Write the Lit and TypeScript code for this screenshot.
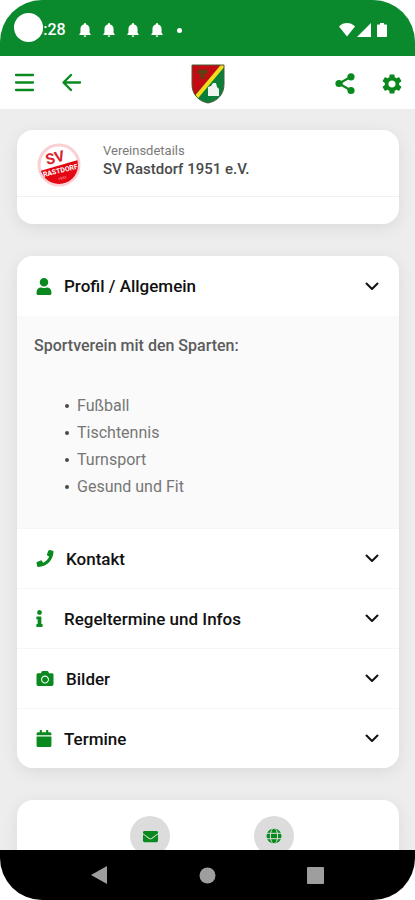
import { LitElement, html, css, nothing } from "lit";
import { customElement, property, state } from "lit/decorators.js";

const icons: Record<string, { box: string; w: number; h: number; d: string }> = {
  user: { box: "0 0 448 512", w: 16, h: 17, d: "M224 256c70.7 0 128-57.3 128-128S294.7 0 224 0 96 57.3 96 128s57.3 128 128 128zm89.6 32h-16.7c-22.2 10.2-46.9 16-72.9 16s-50.6-5.8-72.9-16h-16.7C60.2 288 0 348.2 0 422.4V464c0 26.5 21.5 48 48 48h352c26.5 0 48-21.5 48-48v-41.6c0-74.2-60.2-134.4-134.4-134.4z" },
  phone: { box: "0 0 512 512", w: 18, h: 17, d: "M493.4 24.6l-104-24c-11.3-2.6-22.9 3.3-27.5 13.9l-48 112c-4.2 9.8-1.4 21.3 6.9 28l60.6 49.6c-36 76.7-98.9 140.5-177.2 177.2l-49.6-60.6c-6.8-8.3-18.2-11.1-28-6.9l-112 48C3.9 366.5-2 378.1.6 389.4l24 104C27.1 504.2 36.7 512 48 512c256.1 0 464-207.5 464-464 0-11.2-7.7-20.9-18.6-23.4z" },
  info: { box: "0 0 192 512", w: 7, h: 17, d: "M20 424.229h20V279.771H20c-11.046 0-20-8.954-20-20V212c0-11.046 8.954-20 20-20h112c11.046 0 20 8.954 20 20v212.229h20c11.046 0 20 8.954 20 20V492c0 11.046-8.954 20-20 20H20c-11.046 0-20-8.954-20-20v-47.771c0-11.046 8.954-20 20-20zM96 0C56.235 0 24 32.235 24 72s32.235 72 72 72 72-32.235 72-72S135.764 0 96 0z" },
  camera: { box: "0 0 512 512", w: 18, h: 17, d: "M512 144v288c0 26.5-21.5 48-48 48H48c-26.5 0-48-21.5-48-48V144c0-26.5 21.5-48 48-48h88l12.3-32.9c7-18.7 24.9-31.1 44.9-31.1h125.5c20 0 37.9 12.4 44.9 31.1L376 96h88c26.5 0 48 21.5 48 48zM376 288c0-66.2-53.8-120-120-120s-120 53.8-120 120 53.8 120 120 120 120-53.8 120-120zm-32 0c0 48.5-39.5 88-88 88s-88-39.5-88-88 39.5-88 88-88 88 39.5 88 88z" },
  calendar: { box: "0 0 448 512", w: 16, h: 17, d: "M12 192h424c6.6 0 12 5.4 12 12v260c0 26.5-21.5 48-48 48H48c-26.5 0-48-21.5-48-48V204c0-6.6 5.4-12 12-12zm436-44v-36c0-26.5-21.5-48-48-48h-48V12c0-6.6-5.4-12-12-12h-40c-6.6 0-12 5.4-12 12v52H160V12c0-6.6-5.4-12-12-12h-40c-6.6 0-12 5.4-12 12v52H48C21.5 64 0 85.5 0 112v36c0 6.6 5.4 12 12 12h424c6.6 0 12-5.4 12-12z" },
  envelope: { box: "0 0 512 512", w: 15, h: 15, d: "M502.3 190.8c3.9-3.1 9.7-.2 9.7 4.7V400c0 26.5-21.5 48-48 48H48c-26.5 0-48-21.5-48-48V195.6c0-5 5.7-7.8 9.7-4.7 22.4 17.4 52.1 39.5 154.1 113.6 21.1 15.4 56.7 47.8 92.2 47.6 35.7.3 72-32.8 92.3-47.6 102-74.1 131.6-96.3 154-113.7zM256 320c23.2.4 56.6-29.2 73.4-41.4 132.7-96.3 142.8-104.7 173.4-128.7 5.8-4.5 9.2-11.5 9.2-18.9v-19c0-26.5-21.5-48-48-48H48c-26.5 0-48 21.5-48 48v19c0 7.4 3.4 14.3 9.2 18.9 30.6 23.9 40.7 32.4 173.4 128.7 16.8 12.2 50.2 41.8 73.4 41.4z" },
  gear: { box: "0 0 24 24", w: 24, h: 24, d: "M19.14 12.94c.04-.3.06-.61.06-.94 0-.32-.02-.64-.07-.94l2.03-1.58c.18-.14.23-.41.12-.61l-1.92-3.32c-.12-.22-.37-.29-.59-.22l-2.39.96c-.5-.38-1.03-.7-1.62-.94l-.36-2.54c-.04-.24-.24-.41-.48-.41h-3.84c-.24 0-.43.17-.47.41l-.36 2.54c-.59.24-1.13.57-1.62.94l-2.39-.96c-.22-.08-.47 0-.59.22L2.74 8.87c-.12.21-.08.47.12.61l2.03 1.58c-.05.3-.09.63-.09.94s.02.64.07.94l-2.03 1.58c-.18.14-.23.41-.12.61l1.92 3.32c.12.22.37.29.59.22l2.39-.96c.5.38 1.03.7 1.62.94l.36 2.54c.05.24.24.41.48.41h3.84c.24 0 .44-.17.47-.41l.36-2.54c.59-.24 1.13-.56 1.62-.94l2.39.96c.22.08.47 0 .59-.22l1.92-3.32c.12-.22.07-.47-.12-.61l-2.01-1.58zM12 15.6c-1.98 0-3.6-1.62-3.6-3.6s1.62-3.6 3.6-3.6 3.6 1.62 3.6 3.6-1.62 3.6-3.6 3.6z" },
  bell: { box: "4 2 16 20", w: 12, h: 14, d: "M12 22c1.1 0 2-.9 2-2h-4c0 1.1.9 2 2 2zM18.5 16v-5.5c0-3.1-1.9-5.6-4.9-6.3v-.7c0-.9-.7-1.6-1.6-1.6s-1.6.7-1.6 1.6v.7c-3 .7-4.9 3.2-4.9 6.3V16L4 17.6v1.4h16v-1.4z" },
  wifi: { box: "0 0 16 14", w: 16, h: 14, d: "M8 13.500L0 3.400C2.200 1.200 5 0 8 0s5.800 1.200 8 3.400z" },
  signal: { box: "0 0 14 14", w: 14, h: 14, d: "M14 0v14H0z" },
  battery: { box: "0 0 10 14", w: 10, h: 14, d: "M3 0h4v1.500h2c.6 0 1 .4 1 1V13c0 .6-.4 1-1 1H1c-.6 0-1-.4-1-1V2.500c0-.6.4-1 1-1h2z" },
};

const icon = (name: string) => {
  const i = icons[name];
  return html`<svg viewBox=${i.box} width=${i.w} height=${i.h} aria-hidden="true"><path fill="currentColor" d=${i.d} /></svg>`;
};

const stroke = (w: number, h: number, d: string, width = 2) => html`
  <svg viewBox="0 0 ${w} ${h}" width=${w} height=${h} aria-hidden="true">
    <path d=${d} fill="none" stroke="currentColor" stroke-width=${width} stroke-linecap="round" stroke-linejoin="round" />
  </svg>`;

const share = html`<svg viewBox="0 0 24 24" width="24" height="24" aria-hidden="true">
  <path d="M18 4.800L6 11.500l12 7" fill="none" stroke="currentColor" stroke-width="2.200" />
  <g fill="currentColor">
    <circle cx="18" cy="4.800" r="3.600" />
    <circle cx="6" cy="11.500" r="3.600" />
    <circle cx="18" cy="18.500" r="3.600" />
  </g>
</svg>`;

const globe = html`<svg viewBox="0 0 16 16" width="16" height="16" aria-hidden="true">
  <circle cx="8" cy="8" r="7.500" fill="currentColor" />
  <g fill="none" stroke="#dcdcdc">
    <ellipse cx="8" cy="8" rx="3.600" ry="8" />
    <path d="M0 5.300h16M0 10.700h16" />
  </g>
</svg>`;

const crest = html`<svg viewBox="0 0 34 40" width="34" height="40" role="img" aria-label="Wappen Rastdorf">
  <defs><clipPath id="shield"><path d="M1 1h32v19c0 10-6 17-16 19C7 37 1 30 1 20z" /></clipPath></defs>
  <g clip-path="url(#shield)">
    <path fill="#0a7f3a" d="M0 0h34v40H0z" />
    <path fill="#c40a12" d="M0 0h31L0 36z" />
    <path d="M34-1L3 36" stroke="#f7dc1c" stroke-width="4" />
    <path fill="#6f3510" d="M6 7l3-2 3 1 3-1 2 2-1 3h-3l1 5h-5l1-5H7z" />
    <path d="M7 8h9M9 12h5" stroke="#3f5a16" />
    <path fill="#eef4ee" d="M17 32V23l3-1 2-3h3l1 4 2 2v7z" />
  </g>
  <path d="M1 1h32v19c0 10-6 17-16 19C7 37 1 30 1 20z" fill="none" stroke="#4c5a34" />
</svg>`;

const clubLogo = html`<svg viewBox="0 0 44 44" width="44" height="44" role="img" aria-label="Logo SV Rastdorf">
  <defs><clipPath id="disc"><circle cx="22" cy="22" r="19" /></clipPath></defs>
  <circle cx="22" cy="22" r="20" fill="#fff" stroke="#fbd0d4" stroke-width="3" />
  <g clip-path="url(#disc)"><path fill="#e30613" d="M0 29l44-13v28H0z" /></g>
  <g transform="rotate(-14 22 22)" text-anchor="middle" font-family="Roboto, sans-serif" font-weight="700">
    <text x="20" y="19" font-size="15" fill="#d9232e">SV</text>
    <text x="22" y="30" font-size="7" fill="#fff">RASTDORF</text>
    <text x="22" y="37" font-size="4" fill="#f7808a">1951</text>
  </g>
</svg>`;

@customElement("accordion-row")
export class AccordionRow extends LitElement {
  @property() label = "";
  @property() icon = "";
  @property({ type: Boolean, reflect: true }) open = false;

  static styles = css`
    :host { display: block; }
    :host(:not(:first-child)) .head { border-top: 1px solid #f6f6f6; }
    h2 { margin: 0; }
    .head {
      box-sizing: border-box; width: 100%; height: 60px; padding: 0 20px 0 19px;
      display: flex; align-items: center; gap: 12px;
      border: 0; background: #fff; color: #111; cursor: pointer;
      font: 500 17px/24px Roboto, sans-serif; text-align: left;
    }
    .icon { display: flex; min-width: 16px; color: #0a8a1e; }
    .label { flex: 1; }
    .chevron { display: flex; }
    .body { background: #fafafa; padding: 16px; }
  `;

  private toggle() { this.open = !this.open; }

  render() {
    return html`
      <h2>
        <button class="head" aria-expanded=${this.open} @click=${this.toggle}>
          <span class="icon">${icon(this.icon)}</span>
          <span class="label">${this.label}</span>
          <span class="chevron">${stroke(14, 9, "M1.500 1.500l5.500 5.500 5.500-5.500")}</span>
        </button>
      </h2>
      ${this.open ? html`<div class="body"><slot></slot></div>` : nothing}
    `;
  }
}

@customElement("app-root")
export class AppRoot extends LitElement {
  @state() private sports = ["Fußball", "Tischtennis", "Turnsport", "Gesund und Fit"];

  static styles = css`
    :host { display: block; background: #fff; font-family: Roboto, sans-serif; }
    .screen {
      height: 100vh; display: flex; flex-direction: column;
      overflow: hidden; border-radius: 42px; background: #ededed;
    }
    button { border: 0; padding: 0; background: none; color: inherit; cursor: pointer; display: flex; }
    svg { display: block; }

    .status {
      position: relative; flex: none; height: 56px; box-sizing: border-box;
      padding: 4px 28px 0 25px; display: flex; align-items: center;
      background: #0a8a2c; color: #fff;
    }
    .camera {
      position: absolute; left: 14px; top: 13px; width: 29px; height: 29px;
      border-radius: 50%; background: #fff;
    }
    .time { font-size: 16px; font-weight: 500; line-height: 20px; }
    .notices { display: flex; align-items: center; gap: 12px; margin-left: 13px; flex: 1; }
    .dot { width: 5px; height: 5px; margin-left: 2px; border-radius: 50%; background: #fff; }
    .levels { display: flex; gap: 2px; }
    .levels :last-child { margin-left: 4px; }

    .bar {
      flex: none; height: 53px; padding: 2px 11px 0 12px; box-sizing: border-box;
      background: #fff; color: #0a8a1e;
      display: grid; grid-template-columns: 1fr auto 1fr; align-items: center;
    }
    .side { display: flex; gap: 23px; align-items: center; }
    .side:last-child { justify-content: flex-end; }

    main {
      flex: 1; min-height: 0; overflow: hidden; padding: 21px 16px 0 17px;
      display: flex; flex-direction: column; gap: 32px;
    }
    .card {
      flex: none; border-radius: 16px; background: #fff; overflow: hidden;
      box-shadow: 0 4px 16px rgba(0, 0, 0, 0.08);
    }
    .club {
      display: flex; align-items: center; gap: 22px; height: 66px; padding: 0 20px;
      border-bottom: 1px solid #f0f0f0;
    }
    .club svg { margin-top: 4px; }
    .club p { margin: 0; font-size: 13px; line-height: 16px; color: #7a7a7a; }
    .club h1 { margin: 0 0 4px; font-size: 15px; line-height: 20px; font-weight: 500; color: #4a4a4a; }
    .foot { height: 27px; }

    .intro { margin: 0; padding: 4px 1px 0; font-size: 16px; line-height: 20px; font-weight: 500; color: #5c5c5c; }
    .sports {
      margin: 36px 0 12px; padding: 0 0 0 44px; list-style: none;
      font-size: 16px; line-height: 27px; color: #767676;
    }
    .sports li { display: flex; align-items: center; }
    .sports li::before { content: ""; width: 4px; height: 4px; margin: 0 8px 0 -12px; border-radius: 50%; background: #4a4a4a; }

    .links { display: flex; justify-content: center; gap: 84px; padding: 16px 0 24px 8px; }
    .links a {
      width: 40px; height: 40px; border-radius: 50%; background: #dcdcdc; color: #0a8a1e;
      display: flex; align-items: center; justify-content: center;
    }

    .nav {
      flex: none; height: 50px; background: #000; color: #9e9e9e;
      display: flex; align-items: center; justify-content: center; gap: 91px;
    }
  `;

  render() {
    return html`
      <div class="screen">
        <div class="status">
          <span class="time">10:28</span>
          <span class="camera"></span>
          <div class="notices">
            ${[0, 1, 2, 3].map(() => icon("bell"))}
            <span class="dot"></span>
          </div>
          <div class="levels">${icon("wifi")}${icon("signal")}${icon("battery")}</div>
        </div>

        <header class="bar">
          <div class="side">
            <button aria-label="Menü">${stroke(24, 24, "M4 3h17M4 10.500h17M4 18h17", 2.3)}</button>
            <button aria-label="Zurück">${stroke(24, 24, "M21 10.500H5M12 3l-7.500 7.500 7.500 7.500", 2.4)}</button>
          </div>
          ${crest}
          <div class="side">
            <button aria-label="Teilen">${share}</button>
            <button aria-label="Einstellungen">${icon("gear")}</button>
          </div>
        </header>

        <main>
          <section class="card">
            <div class="club">
              ${clubLogo}
              <div>
                <p>Vereinsdetails</p>
                <h1>SV Rastdorf 1951 e.V.</h1>
              </div>
            </div>
            <div class="foot"></div>
          </section>

          <section class="card">
            <accordion-row label="Profil / Allgemein" icon="user" open>
              <p class="intro">Sportverein mit den Sparten:</p>
              <ul class="sports">${this.sports.map((s) => html`<li>${s}</li>`)}</ul>
            </accordion-row>
            <accordion-row label="Kontakt" icon="phone"></accordion-row>
            <accordion-row label="Regeltermine und Infos" icon="info"></accordion-row>
            <accordion-row label="Bilder" icon="camera"></accordion-row>
            <accordion-row label="Termine" icon="calendar"></accordion-row>
          </section>

          <section class="card links">
            <a href="#mail" aria-label="E-Mail">${icon("envelope")}</a>
            <a href="#web" aria-label="Webseite">${globe}</a>
          </section>
        </main>

        <nav class="nav">
          <button aria-label="Back">
            <svg viewBox="0 0 17 18" width="17" height="18"><path fill="currentColor" d="M16 0v18L0 9z" /></svg>
          </button>
          <button aria-label="Home">
            <svg viewBox="0 0 17 17" width="17" height="17"><circle cx="8.500" cy="8.500" r="8" fill="currentColor" /></svg>
          </button>
          <button aria-label="Recents">
            <svg viewBox="0 0 17 17" width="17" height="17"><rect width="17" height="17" rx="1" fill="currentColor" /></svg>
          </button>
        </nav>
      </div>
    `;
  }
}
